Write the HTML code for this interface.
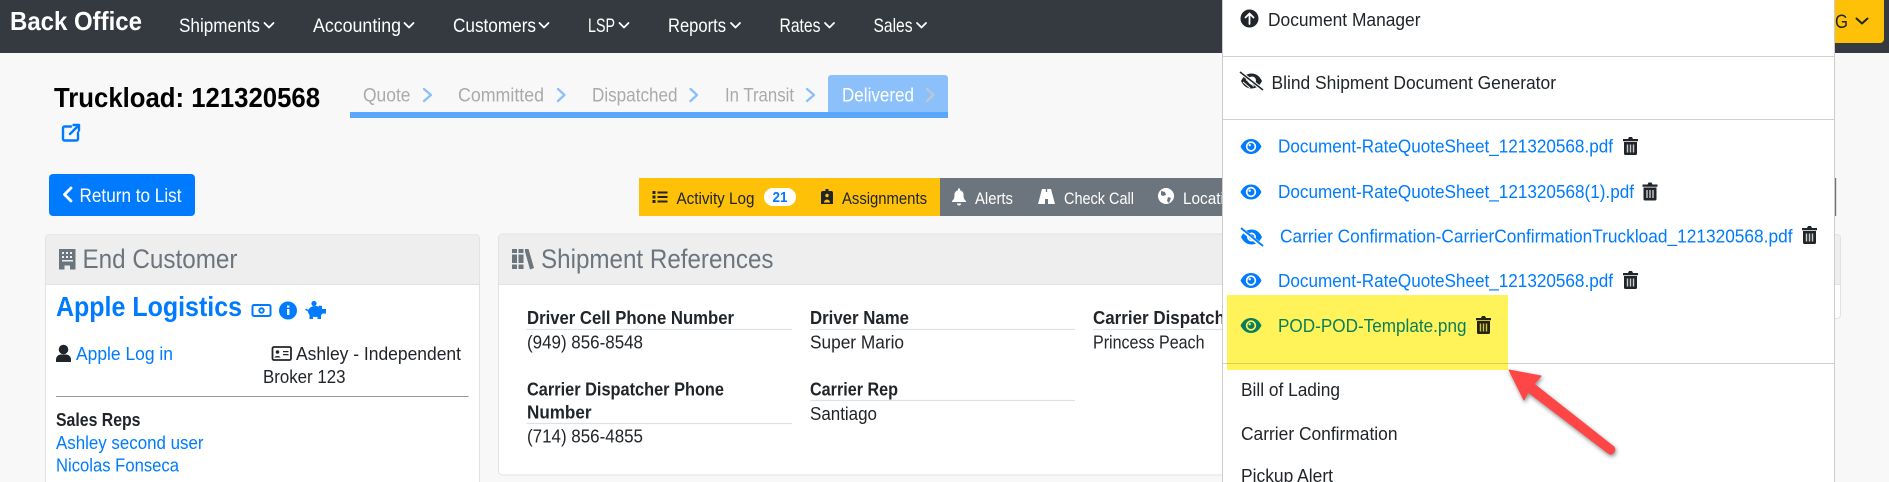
<!DOCTYPE html>
<html><head><meta charset="utf-8"><title>Back Office</title>
<style>
html,body{margin:0;padding:0;width:1889px;height:482px;overflow:hidden;background:#f8f8f8}
svg{display:block}
text{font-family:"Liberation Sans",sans-serif;white-space:pre}
.n{fill:#fff;font-size:19.500px}
.s{fill:#aaa;font-size:19.500px}
.t{font-size:17px}
.d{fill:#212529;font-size:18.500px}
.l{fill:#007bff;font-size:18.500px}
.b{fill:#212529;font-size:18.500px;font-weight:bold}
.h{fill:#6c757d;font-size:27px}
.c{fill:none;stroke-linecap:round;stroke-linejoin:round}
</style></head><body>
<svg width="1889" height="482" viewBox="0 0 1889 482" xmlns="http://www.w3.org/2000/svg">
<defs>
<g id="eye"><path d="M0 7.500C2.500 2.500 6 0 10.500 0S18.500 2.500 21 7.500C18.500 12.500 15 15 10.500 15S2.500 12.500 0 7.500Z" fill="currentColor"/><circle cx="10.500" cy="7.500" r="5.200" fill="#fff"/><circle cx="10.500" cy="7.500" r="3.500" fill="currentColor"/><circle cx="9.200" cy="6.200" r="1.200" fill="#fff"/></g>
<g id="trash"><path d="M0 2h5l1-2h3l1 2h5v2.200H0Z" fill="currentColor"/><path d="M1 5h13v11.500a1.500 1.500 0 0 1-1.500 1.500h-10A1.500 1.500 0 0 1 1 16.500Z" fill="currentColor"/><path d="M4.500 7.500v8M7.500 7.500v8M10.500 7.500v8" stroke="#ccc" stroke-width="1.400"/></g>
<g id="slash"><path d="M0 8C2.500 3 6 .5 10.500.5S18.500 3 21 8C18.500 13 15 15.500 10.500 15.500S2.500 13 0 8Z" fill="currentColor"/><circle cx="10.500" cy="8" r="4.500" fill="#fff"/><circle cx="10.500" cy="8" r="2.800" fill="currentColor"/><path d="M0 0L21 17" stroke="#fff" stroke-width="4"/><path d="M0 -1L22 17" stroke="currentColor" stroke-width="1.800"/></g>
</defs>

<rect width="1889" height="482" fill="#f8f8f8"/>

<!-- nav -->
<rect width="1889" height="53" fill="#343a40"/>
<text x="10" y="30" font-size="26" font-weight="bold" fill="#fff" textLength="132" lengthAdjust="spacingAndGlyphs">Back Office</text>
<text class="n" x="179" y="32" textLength="81" lengthAdjust="spacingAndGlyphs">Shipments</text>
<path class="c" stroke="#fff" stroke-width="1.800" d="M264.500 23l4.500 4.500 4.500-4.500"/>
<text class="n" x="313" y="32" textLength="88" lengthAdjust="spacingAndGlyphs">Accounting</text>
<path class="c" stroke="#fff" stroke-width="1.800" d="M404.500 23l4.500 4.500 4.500-4.500"/>
<text class="n" x="453" y="32" textLength="83" lengthAdjust="spacingAndGlyphs">Customers</text>
<path class="c" stroke="#fff" stroke-width="1.800" d="M539.500 23l4.500 4.500 4.500-4.500"/>
<text class="n" x="588" y="32" textLength="27" lengthAdjust="spacingAndGlyphs">LSP</text>
<path class="c" stroke="#fff" stroke-width="1.800" d="M619.500 23l4.500 4.500 4.500-4.500"/>
<text class="n" x="668" y="32" textLength="58" lengthAdjust="spacingAndGlyphs">Reports</text>
<path class="c" stroke="#fff" stroke-width="1.800" d="M731 23l4.500 4.500 4.500-4.500"/>
<text class="n" x="779.500" y="32" textLength="41" lengthAdjust="spacingAndGlyphs">Rates</text>
<path class="c" stroke="#fff" stroke-width="1.800" d="M825 23l4.500 4.500 4.500-4.500"/>
<text class="n" x="873.500" y="32" textLength="39" lengthAdjust="spacingAndGlyphs">Sales</text>
<path class="c" stroke="#fff" stroke-width="1.800" d="M917 23l4.500 4.500 4.500-4.500"/>

<!-- yellow button -->
<path d="M1800 0H1884V39a4 4 0 0 1-4 4H1800Z" fill="#ffc107"/>
<text x="1835" y="28" font-size="19" fill="#212529" textLength="13" lengthAdjust="spacingAndGlyphs">G</text>
<path class="c" stroke="#212529" stroke-width="2" d="M1856.500 18.500l5.500 5 5.500-5"/>

<!-- title -->
<text x="54" y="107" font-size="28" font-weight="bold" fill="#000" textLength="266" lengthAdjust="spacingAndGlyphs">Truckload: 121320568</text>
<path class="c" stroke="#007bff" stroke-width="2.400" d="M71 126.500h-6.500a1.500 1.500 0 0 0-1.500 1.500v11a1.500 1.500 0 0 0 1.500 1.500h12a1.500 1.500 0 0 0 1.500-1.500v-6.500M70 134l9-9M73.500 125h5.500v5.500"/>

<!-- stepper -->
<path d="M828 112V78a3 3 0 0 1 3-3H945a3 3 0 0 1 3 3V112Z" fill="#8cc0fb"/>
<rect x="350" y="112" width="598" height="6" fill="#5aa7ff"/>
<text class="s" x="363" y="101.500" textLength="47.500" lengthAdjust="spacingAndGlyphs">Quote</text>
<path class="c" stroke="#8cc0fb" stroke-width="2.400" d="M424 89l7 6-7 6"/>
<text class="s" x="458" y="101.500" textLength="86" lengthAdjust="spacingAndGlyphs">Committed</text>
<path class="c" stroke="#8cc0fb" stroke-width="2.400" d="M558 89l6.500 6-6.500 6"/>
<text class="s" x="592" y="101.500" textLength="85.500" lengthAdjust="spacingAndGlyphs">Dispatched</text>
<path class="c" stroke="#8cc0fb" stroke-width="2.400" d="M690.500 89l6.500 6-6.500 6"/>
<text class="s" x="725" y="101.500" textLength="69" lengthAdjust="spacingAndGlyphs">In Transit</text>
<path class="c" stroke="#8cc0fb" stroke-width="2.400" d="M807 89l7 6-7 6"/>
<text x="842" y="101.500" font-size="19.500" fill="#fff" textLength="72" lengthAdjust="spacingAndGlyphs">Delivered</text>
<path class="c" stroke="#bcc7d2" stroke-width="2.400" d="M927 89l6.500 6-6.500 6"/>

<!-- return button -->
<rect x="49" y="174" width="146" height="42" rx="4" fill="#007bff"/>
<path class="c" stroke="#fff" stroke-width="2.800" d="M71 188l-6.500 6.500 6.500 6.500"/>
<text x="79.500" y="202" font-size="19" fill="#fff" textLength="102" lengthAdjust="spacingAndGlyphs">Return to List</text>

<!-- toolbar -->
<rect x="639" y="178" width="301" height="38" fill="#ffc107"/>
<rect x="940" y="178" width="896" height="38" fill="#6c757d"/>
<path d="M652.500 191h3v3h-3zM652.500 195.500h3v3h-3zM652.500 200h3v3h-3z" fill="#212529"/>
<path d="M657.500 191.500h10v2h-10zM657.500 196h10v2h-10zM657.500 200.500h10v2h-10z" fill="#212529"/>
<text class="t" x="676.500" y="204" fill="#212529" textLength="78" lengthAdjust="spacingAndGlyphs">Activity Log</text>
<rect x="764" y="188" width="32" height="18" rx="9" fill="#fff"/>
<text x="772.500" y="202" font-size="15" font-weight="bold" fill="#007bff" textLength="15" lengthAdjust="spacingAndGlyphs">21</text>
<path d="M821 193a2 2 0 0 1 2-2h2.500v-2h3v2h2.500a2 2 0 0 1 2 2v11h-12Z" fill="#212529"/>
<circle cx="827" cy="195.500" r="1.700" fill="#ffc107"/><path d="M824 202.500a3 3 0 0 1 6 0Z" fill="#ffc107"/>
<text class="t" x="842" y="204" fill="#212529" textLength="85" lengthAdjust="spacingAndGlyphs">Assignments</text>
<path d="M952 201c2-1.500 2.500-3.500 2.500-6.500a4.500 4.500 0 0 1 9 0c0 3 .5 5 2.500 6.500v1h-14ZM957 203.500h4a2 2 0 0 1-4 0ZM958 188.500h2v2h-2Z" fill="#fff"/>
<text class="t" x="975" y="204" fill="#fff" textLength="38" lengthAdjust="spacingAndGlyphs">Alerts</text>
<path d="M1042 189H1045.800V192H1047.200V189H1051L1055 204H1048V199H1045V204H1038Z" fill="#fff"/>
<text class="t" x="1064" y="204" fill="#fff" textLength="70" lengthAdjust="spacingAndGlyphs">Check Call</text>
<circle cx="1166" cy="196" r="8" fill="#fff"/><path d="M1161 191l4 1 1 3-3 1-2-1ZM1168 197l3 1-2 5-2-2Z" fill="#6c757d"/>
<text class="t" x="1183" y="204" fill="#fff" textLength="58" lengthAdjust="spacingAndGlyphs">Location</text>

<!-- end customer card -->
<rect x="45.500" y="234.500" width="434" height="260" rx="4" fill="#fff" stroke="#e2e2e2"/>
<path d="M46 284V238a3.500 3.500 0 0 1 3.500-3.500H475.500a3.500 3.500 0 0 1 3.500 3.500V284Z" fill="#eee"/>
<path d="M46 284.500H479" stroke="#e2e2e2"/>
<path d="M59 249h16.500v20.500h-5.500v-4h-5.500v4H59Z" fill="#6c757d"/>
<path d="M62 252h2v2h-2zM66 252h2v2h-2zM70 252h2v2h-2zM62 256h2v2h-2zM66 256h2v2h-2zM70 256h2v2h-2zM62 260h11v1.500H62z" fill="#eee"/>
<text class="h" x="82.500" y="268" textLength="155" lengthAdjust="spacingAndGlyphs">End Customer</text>
<text x="56" y="316" font-size="28" font-weight="bold" fill="#007bff" textLength="186" lengthAdjust="spacingAndGlyphs">Apple Logistics</text>
<rect x="252.500" y="305" width="18" height="11" rx="1.500" fill="none" stroke="#007bff" stroke-width="2"/><circle cx="261.500" cy="310.500" r="3.200" fill="#007bff"/><circle cx="261.500" cy="310.500" r="1.300" fill="#fff"/>
<circle cx="288" cy="310.500" r="9" fill="#007bff"/><rect x="287" y="309" width="2.400" height="6" fill="#fff"/><rect x="287" y="305.500" width="2.400" height="2.200" fill="#fff"/>
<!-- piggy -->
<ellipse cx="315.500" cy="311.500" rx="7.500" ry="5.500" fill="#007bff"/>
<circle cx="314" cy="303.500" r="2.600" fill="#007bff"/>
<path d="M319 305.500l3 .5v3l-3 0ZM322 309h4v4.500h-3.500ZM309.500 314h3.500v5h-3.500ZM317.500 314h3.500v5h-3.500ZM306 308.500l2.500 1.500-.8 1.400-2.500-1.500Z" fill="#007bff"/>

<circle cx="63.500" cy="349.500" r="4.800" fill="#212529"/><path d="M56 362v-2.500c0-3 2.500-5 5-5h5c2.500 0 5 2 5 5V362Z" fill="#212529"/>
<text class="l" x="76" y="360" textLength="97" lengthAdjust="spacingAndGlyphs">Apple Log in</text>
<rect x="272.500" y="347" width="18.500" height="13" rx="1.500" fill="none" stroke="#212529" stroke-width="1.800"/><circle cx="277.500" cy="352" r="1.800" fill="#212529"/><path d="M274.500 357.500c0-2 6-2 6 0ZM283 351h5.500v1.300H283zM283 354h5.500v1.300H283z" fill="#212529"/>
<text class="d" x="296" y="360" textLength="165" lengthAdjust="spacingAndGlyphs">Ashley - Independent</text>
<text class="d" x="263" y="383" textLength="82.500" lengthAdjust="spacingAndGlyphs">Broker 123</text>
<path d="M56 396.500H468.500" stroke="#999" stroke-width="1"/>
<text class="b" x="56" y="426" textLength="84.500" lengthAdjust="spacingAndGlyphs">Sales Reps</text>
<text class="l" x="56" y="449" textLength="147.500" lengthAdjust="spacingAndGlyphs">Ashley second user</text>
<text class="l" x="56" y="471.500" textLength="123" lengthAdjust="spacingAndGlyphs">Nicolas Fonseca</text>

<!-- shipment references card -->
<path d="M498.500 238a4 4 0 0 1 4-4H1240V475H502.500a4 4 0 0 1-4-4Z" fill="#fff" stroke="#e2e2e2"/>
<path d="M499 284V238a3.500 3.500 0 0 1 3.500-3.500H1240V284Z" fill="#eee"/>
<path d="M499 284.500H1240" stroke="#e2e2e2"/>
<path d="M512 249h5v20h-5zM518.500 249h5v20h-5zM525 249h3.500l5.500 19-4 1.500-5-18Z" fill="#6c757d"/>
<path d="M512 253h11.500v1.500H512zM512 263h11.500v1.500H512z" fill="#eee"/>
<text class="h" x="541" y="268" textLength="232.500" lengthAdjust="spacingAndGlyphs">Shipment References</text>
<path d="M526.500 329.500H792M810 329.500H1075M1093 329.500H1240M526.500 423.500H792M810 400.500H1075" stroke="#dee2e6" stroke-width="1.200"/>
<text class="b" x="527" y="324" textLength="207" lengthAdjust="spacingAndGlyphs">Driver Cell Phone Number</text>
<text class="d" x="527" y="348.500" textLength="116" lengthAdjust="spacingAndGlyphs">(949) 856-8548</text>
<text class="b" x="527" y="395.500" textLength="197" lengthAdjust="spacingAndGlyphs">Carrier Dispatcher Phone</text>
<text class="b" x="527" y="418.500" textLength="64.500" lengthAdjust="spacingAndGlyphs">Number</text>
<text class="d" x="527" y="442.500" textLength="116" lengthAdjust="spacingAndGlyphs">(714) 856-4855</text>
<text class="b" x="810" y="324" textLength="99" lengthAdjust="spacingAndGlyphs">Driver Name</text>
<text class="d" x="810" y="348.500" textLength="94" lengthAdjust="spacingAndGlyphs">Super Mario</text>
<text class="b" x="810" y="395.500" textLength="88" lengthAdjust="spacingAndGlyphs">Carrier Rep</text>
<text class="d" x="810" y="420" textLength="67" lengthAdjust="spacingAndGlyphs">Santiago</text>
<text class="b" x="1093" y="324" textLength="148" lengthAdjust="spacingAndGlyphs">Carrier Dispatcher</text>
<text class="d" x="1093" y="348.500" textLength="111.500" lengthAdjust="spacingAndGlyphs">Princess Peach</text>

<!-- right card behind menu -->
<path d="M1700 234.500H1837a3.500 3.500 0 0 1 3.500 3.500V315a3.500 3.500 0 0 1-3.500 3.500H1700Z" fill="#fff" stroke="#e2e2e2"/>
<path d="M1700 235H1837a3 3 0 0 1 3 3V284H1700Z" fill="#eee"/>
<path d="M1700 284.500H1840" stroke="#e2e2e2"/>

<!-- dropdown menu -->
<rect x="1222.500" y="-2" width="612" height="490" fill="#fff" stroke="#ccc"/>
<path d="M1223 56.500H1834M1223 119.500H1834M1223 363.500H1834" stroke="#d0d0d0"/>

<circle cx="1249.500" cy="18.500" r="9" fill="#212529"/>
<path class="c" stroke="#fff" stroke-width="1.800" d="M1249.500 24v-10.500M1245.500 17.500l4-4 4 4"/>
<text class="d" x="1268" y="26" textLength="152.500" lengthAdjust="spacingAndGlyphs">Document Manager</text>

<g transform="translate(1241 73)"><path d="M0 8C2.500 3 6 .5 10.500.5S18.500 3 21 8C18.500 13 15 15.500 10.500 15.500S2.500 13 0 8Z" fill="#212529"/><circle cx="11" cy="7.500" r="4" fill="#fff"/><path d="M-1 -1L22 17" stroke="#fff" stroke-width="3.500"/><path d="M-1 -1L22 17" stroke="#212529" stroke-width="1.500"/><path d="M2 9l7 6M5 6.500l8 7" stroke="#fff" stroke-width="1"/></g>
<text class="d" x="1271.500" y="89" textLength="284.500" lengthAdjust="spacingAndGlyphs">Blind Shipment Document Generator</text>

<use href="#eye" x="1240.500" y="139" style="color:#007bff"/>
<text class="l" x="1278" y="152.500" textLength="335" lengthAdjust="spacingAndGlyphs">Document-RateQuoteSheet_121320568.pdf</text>
<use href="#trash" x="1623" y="137" style="color:#212529"/>

<use href="#eye" x="1240.500" y="184.500" style="color:#007bff"/>
<text class="l" x="1278" y="198" textLength="356" lengthAdjust="spacingAndGlyphs">Document-RateQuoteSheet_121320568(1).pdf</text>
<use href="#trash" x="1642.500" y="182.500" style="color:#212529"/>

<use href="#slash" x="1241" y="229" style="color:#007bff"/>
<text class="l" x="1280" y="242.500" textLength="512.500" lengthAdjust="spacingAndGlyphs">Carrier Confirmation-CarrierConfirmationTruckload_121320568.pdf</text>
<use href="#trash" x="1802" y="226" style="color:#212529"/>

<use href="#eye" x="1240.500" y="273" style="color:#007bff"/>
<text class="l" x="1278" y="287" textLength="335" lengthAdjust="spacingAndGlyphs">Document-RateQuoteSheet_121320568.pdf</text>
<use href="#trash" x="1623" y="271" style="color:#212529"/>

<!-- highlight -->
<rect x="1227" y="295" width="281" height="75" fill="#fff359"/>
<path d="M1227 363.500H1508" stroke="#d9ce55"/>
<path transform="translate(1240.500 318)" d="M0 7.500C2.500 2.500 6 0 10.500 0S18.500 2.500 21 7.500C18.500 12.500 15 15 10.500 15S2.500 12.500 0 7.500Z" fill="#0a7d5d"/><circle cx="1251" cy="325.500" r="5.200" fill="#fff359"/><circle cx="1251" cy="325.500" r="3.500" fill="#0a7d5d"/><circle cx="1249.700" cy="324.200" r="1.200" fill="#fff359"/>
<text x="1278" y="332" font-size="18.500" fill="#0a7d5d" textLength="188.500" lengthAdjust="spacingAndGlyphs">POD-POD-Template.png</text>
<g transform="translate(1476 316)"><path d="M0 2h5l1-2h3l1 2h5v2.200H0Z" fill="#26230f"/><path d="M1 5h13v11.500a1.500 1.500 0 0 1-1.500 1.500h-10A1.500 1.500 0 0 1 1 16.500Z" fill="#26230f"/><path d="M4.500 7.500v8M7.500 7.500v8M10.500 7.500v8" stroke="#cdc34c" stroke-width="1.400"/></g>

<text class="d" x="1241" y="396" textLength="99" lengthAdjust="spacingAndGlyphs">Bill of Lading</text>
<text class="d" x="1241" y="440" textLength="156.500" lengthAdjust="spacingAndGlyphs">Carrier Confirmation</text>
<text class="d" x="1241" y="482" textLength="92" lengthAdjust="spacingAndGlyphs">Pickup Alert</text>

<!-- sliver of toolbar to right of menu -->
<rect x="1835" y="178" width="1.200" height="38" fill="#6c757d"/>

<!-- arrow -->
<g style="filter:drop-shadow(1px 2px 2px rgba(0,0,0,.45))">
<path d="M1509 370L1541 376L1534 384L1614 447Q1616 450 1613 453Q1611 455 1608 453L1528 392L1524 400Z" fill="#ff4646" stroke="#ff4646" stroke-width="1" stroke-linejoin="round"/>
</g>
</svg>
</body></html>
